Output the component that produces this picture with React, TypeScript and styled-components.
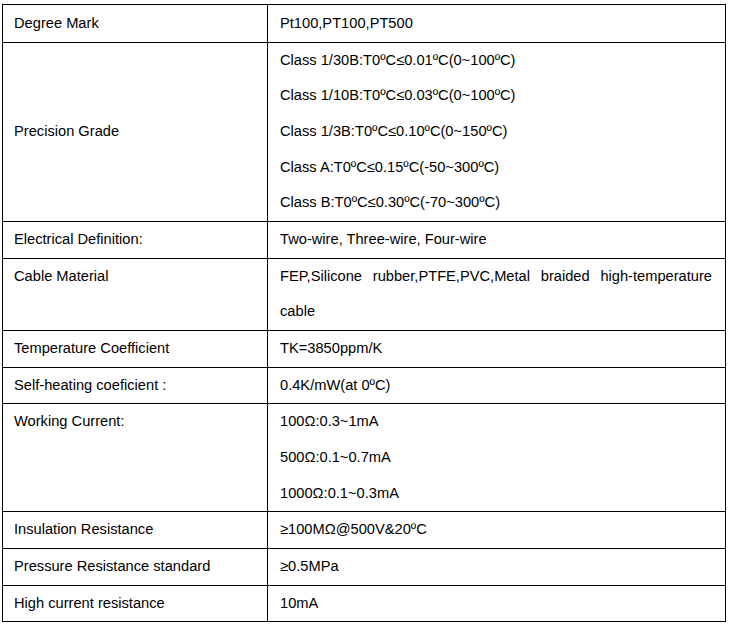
import styled, { createGlobalStyle } from "styled-components";

const GlobalStyle = createGlobalStyle`
  html, body {
    margin: 0;
    padding: 0;
    background: #fff;
  }
  body {
    font-family: "Liberation Sans", Arial, sans-serif;
    color: #000;
  }
`;

interface Spec {
  label: string;
  values: string[];
  align?: "top" | "middle";
  justify?: boolean;
}

const specs: Spec[] = [
  { label: "Degree Mark", values: ["Pt100,PT100,PT500"] },
  {
    label: "Precision Grade",
    values: [
      "Class 1/30B:T0ºC≤0.01ºC(0~100ºC)",
      "Class 1/10B:T0ºC≤0.03ºC(0~100ºC)",
      "Class 1/3B:T0ºC≤0.10ºC(0~150ºC)",
      "Class A:T0ºC≤0.15ºC(-50~300ºC)",
      "Class B:T0ºC≤0.30ºC(-70~300ºC)",
    ],
  },
  { label: "Electrical Definition:", values: ["Two-wire, Three-wire, Four-wire"] },
  {
    label: "Cable Material",
    values: ["FEP,Silicone rubber,PTFE,PVC,Metal braided high-temperature cable"],
    align: "top",
    justify: true,
  },
  { label: "Temperature Coefficient", values: ["TK=3850ppm/K"] },
  { label: "Self-heating coeficient :", values: ["0.4K/mW(at 0ºC)"] },
  {
    label: "Working Current:",
    values: ["100Ω:0.3~1mA", "500Ω:0.1~0.7mA", "1000Ω:0.1~0.3mA"],
    align: "top",
  },
  { label: "Insulation Resistance", values: ["≥100MΩ@500V&20ºC"] },
  { label: "Pressure Resistance standard", values: ["≥0.5MPa"] },
  { label: "High current resistance", values: ["10mA"] },
];

const Page = styled.div`
  padding: 4px 0 0 2px;
`;

const Table = styled.table`
  width: 724px;
  border-collapse: collapse;
  table-layout: fixed;
  font-size: 14.67px;
  line-height: 35.65px;

  tr:first-child td {
    padding-top: 1px;
  }
`;

const LabelCell = styled.td<{ $align: string }>`
  width: 253px;
  border: 1px solid #000;
  padding: 0 0 0 11px;
  vertical-align: ${(p) => p.$align};
  white-space: nowrap;
`;

const ValueCell = styled.td<{ $justify: boolean }>`
  border: 1px solid #000;
  padding: 0 13px 0 12px;
  vertical-align: top;
  text-align: ${(p) => (p.$justify ? "justify" : "left")};
`;

const Line = styled.div`
  white-space: nowrap;
`;

const Para = styled.div`
  text-align: justify;
`;

export default function App() {
  return (
    <Page>
      <GlobalStyle />
      <Table>
        <tbody>
          {specs.map((s) => (
            <tr key={s.label}>
              <LabelCell $align={s.align ?? "middle"}>{s.label}</LabelCell>
              <ValueCell $justify={!!s.justify}>
                {s.justify ? (
                  <Para>{s.values[0]}</Para>
                ) : (
                  s.values.map((v) => <Line key={v}>{v}</Line>)
                )}
              </ValueCell>
            </tr>
          ))}
        </tbody>
      </Table>
    </Page>
  );
}
